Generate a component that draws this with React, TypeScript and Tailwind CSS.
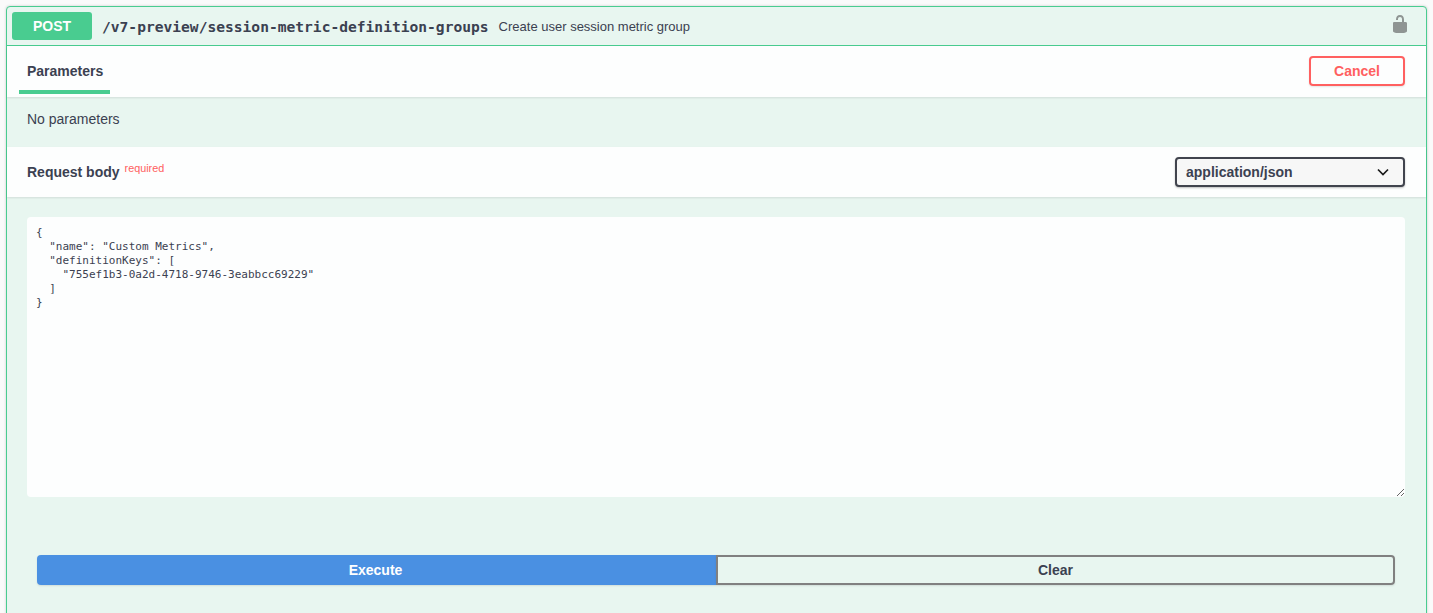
const sample = `{
  "name": "Custom Metrics",
  "definitionKeys": [
    "755ef1b3-0a2d-4718-9746-3eabbcc69229"
  ]
}`;

const App = () => {
  return (
    <div className="h-screen overflow-hidden bg-[#fafafa] pt-[6px] px-[6px] font-['Liberation_Sans',Arial,sans-serif] text-[#3b4151]">
      <div className="w-[1421px] h-[700px] bg-[#e8f6f0] border border-[#49cc90] rounded-[4px] shadow-[0_0_3px_rgba(0,0,0,0.19)]">
        {/* summary */}
        <div className="h-[39px] flex items-center pl-[5px] pr-[5px] border-b border-[#49cc90]">
          <div className="w-[80px] h-[28px] bg-[#49cc90] rounded-[3px] flex items-center justify-center text-white text-[14px] font-bold">
            POST
          </div>
          <span className="ml-[10px] mt-[1px] font-['DejaVu_Sans_Mono',monospace] text-[14.6px] font-bold">
            /v7-preview/session-metric-definition-groups
          </span>
          <span className="ml-[10px] mt-[1px] text-[13px]">Create user session metric group</span>
          <svg className="ml-auto mr-[11px] mb-[4px] w-[20px] h-[20px] fill-[#8f9593]" viewBox="0 0 20 20">
            <path d="M15.8 8H14V5.6C14 2.703 12.665 1 10 1 7.334 1 6 2.703 6 5.6V6h2v-.801C8 3.754 8.797 3 10 3c1.203 0 2 .754 2 2.199V8H4c-.553 0-1 .646-1 1.199V17c0 .549.428 1.139.951 1.307l1.197.387C5.672 18.861 6.55 19 7.1 19h5.8c.549 0 1.428-.139 1.951-.307l1.196-.387c.524-.167.953-.757.953-1.306V9.199C17 8.646 16.352 8 15.8 8z" />
          </svg>
        </div>

        {/* parameters header */}
        <div className="h-[51px] bg-[#fdfefe] flex items-center justify-between pl-[12px] pr-[21px] shadow-[0_1px_2px_rgba(0,0,0,0.1)]">
          <div className="self-stretch relative w-[91px] px-[8px] flex items-center">
            <span className="text-[14px] font-bold">Parameters</span>
            <div className="absolute left-0 right-0 bottom-[3px] h-[4px] bg-[#49cc90]" />
          </div>
          <button className="mb-[1px] w-[96px] h-[30px] border-2 border-[#ff6060] rounded-[4px] text-[#ff6060] text-[14px] font-bold shadow-[0_1px_2px_rgba(0,0,0,0.1)]">
            Cancel
          </button>
        </div>

        <div className="h-[50px] flex items-center pl-[20px] pb-[6px] text-[14px]">No parameters</div>

        {/* request body */}
        <div className="h-[50px] bg-[#fdfefe] flex items-center justify-between pl-[20px] pr-[21px] shadow-[0_1px_2px_rgba(0,0,0,0.1)]">
          <div className="flex items-start">
            <span className="text-[14px] font-bold">Request body</span>
            <span className="ml-[5px] -mt-[2px] text-[10.8px] text-[#ff6060]">required</span>
          </div>
          <div className="w-[230px] h-[30px] bg-[#f7f7f7] border-2 border-[#41444e] rounded-[4px] flex items-center justify-between pl-[9px] pr-[10px] shadow-[0_1px_2px_rgba(0,0,0,0.25)]">
            <span className="text-[14px] font-bold">application/json</span>
            <svg className="w-[20px] h-[20px]" viewBox="0 0 20 20" fill="none" stroke="#1a1a1a" strokeWidth="1.7">
              <path d="M5 7.500l5 5 5-5" />
            </svg>
          </div>
        </div>

        {/* example value */}
        <div className="pt-[20px] pl-[20px] pr-[21px]">
          <textarea
            readOnly
            defaultValue={sample}
            className="block w-full h-[280px] bg-[#fdfefe] rounded-[4px] pl-[9px] pr-[10px] pt-[9px] pb-[10px] outline-none font-['DejaVu_Sans_Mono',monospace] text-[11px] leading-[14px] font-normal text-[#3b4151] resize-y"
          />
        </div>

        {/* actions */}
        <div className="mt-[58px] ml-[30px] mr-[31px] flex h-[30px]">
          <button className="w-1/2 bg-[#4a90e2] rounded-l-[4px] pr-[2px] text-white text-[14px] font-bold shadow-[0_1px_2px_rgba(0,0,0,0.1)]">
            Execute
          </button>
          <button className="w-1/2 border-2 border-[#808080] rounded-r-[4px] text-[14px] font-bold shadow-[0_1px_2px_rgba(0,0,0,0.1)]">
            Clear
          </button>
        </div>
      </div>
    </div>
  );
};

export default App;
